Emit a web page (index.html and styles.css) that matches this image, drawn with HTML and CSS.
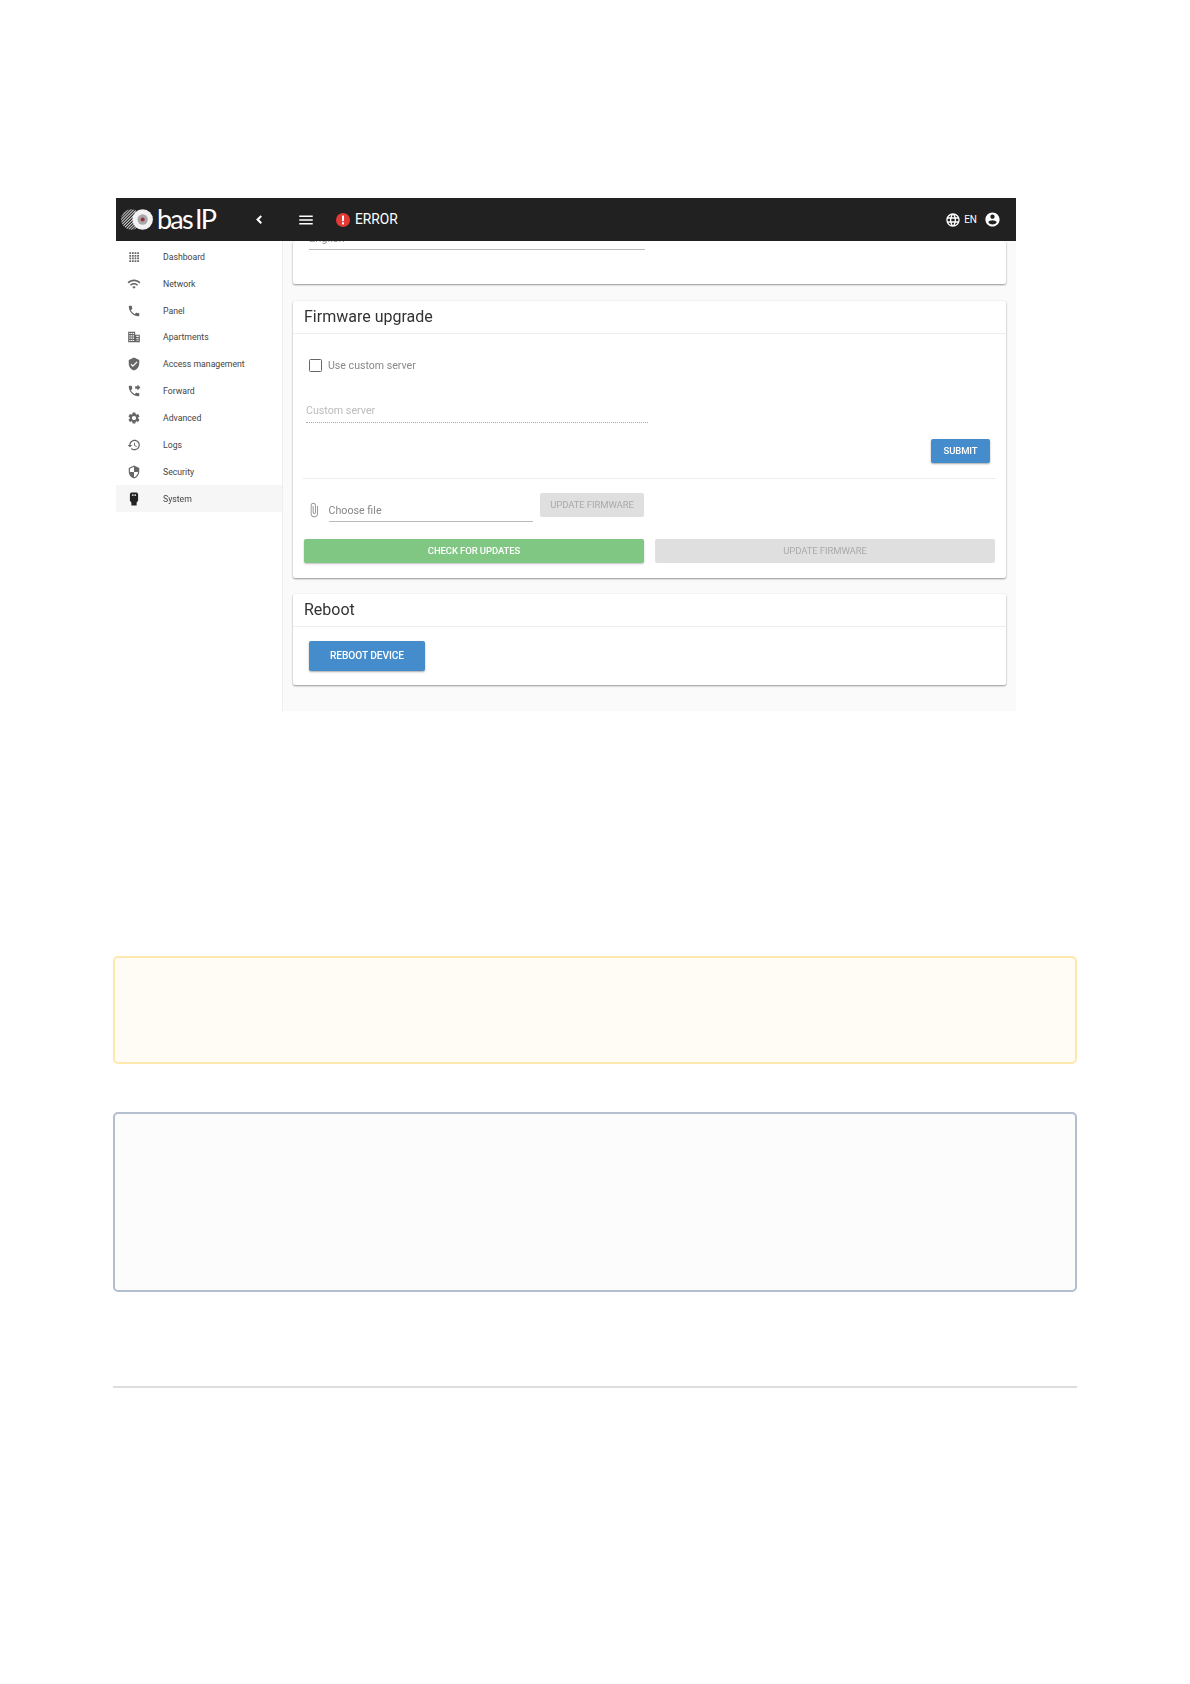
FILE: index.html
```html
<!DOCTYPE html>
<html lang="en">
<head>
<meta charset="utf-8">
<title>Firmware upgrade</title>
<link rel="stylesheet" href="styles.css">
</head>
<body>
<section class="shot">
  <header class="topbar">
    <div class="logo">
      <svg class="logo-mark" viewBox="0 0 34 22" aria-hidden="true">
        <defs>
          <pattern id="hatch" width="2" height="2" patternUnits="userSpaceOnUse" patternTransform="rotate(45)">
            <rect width="2" height="2" fill="#202020"/>
            <rect width="1" height="2" fill="#cfcfcf"/>
          </pattern>
        </defs>
        <circle cx="11" cy="11" r="10" fill="url(#hatch)"/>
        <circle cx="22" cy="11" r="10" fill="#f2f2f2"/>
        <circle cx="22" cy="11" r="5" fill="#a9a9a9"/>
        <circle cx="22" cy="11" r="2" fill="#9c2f3c"/>
      </svg>
      <span class="logo-text">bas IP</span>
    </div>
    <svg class="chev" viewBox="0 0 24 24" aria-hidden="true"><path d="M16 7.400 13.600 5l-7 7 7 7 2.400-2.400L11.400 12z"/></svg>
    <svg class="burger" viewBox="0 0 24 24" aria-hidden="true"><path d="M3 18h18v-2H3v2zm0-5h18v-2H3v2zm0-7v2h18V6H3z"/></svg>
    <svg class="err-icon" viewBox="0 0 16 16" aria-hidden="true"><circle cx="8" cy="8" r="7" fill="#e53935"/><rect x="7" y="3.600" width="2" height="5.600" fill="#fff"/><rect x="7" y="10.400" width="2" height="2" fill="#fff"/></svg>
    <span class="err-text">ERROR</span>
    <span class="spring"></span>
    <svg class="globe" viewBox="0 0 24 24" aria-hidden="true"><path d="M11.990 2C6.470 2 2 6.480 2 12s4.470 10 9.990 10C17.520 22 22 17.520 22 12S17.520 2 11.990 2zm6.930 6h-2.950c-.32-1.250-.78-2.450-1.380-3.560 1.840.63 3.370 1.910 4.330 3.560zM12 4.040c.83 1.200 1.480 2.530 1.910 3.960h-3.820c.43-1.430 1.080-2.760 1.910-3.960zM4.260 14C4.100 13.360 4 12.690 4 12s.1-1.360.26-2h3.380c-.08.66-.14 1.320-.14 2 0 .68.06 1.340.14 2H4.260zm.82 2h2.950c.32 1.250.78 2.450 1.380 3.560-1.840-.63-3.370-1.900-4.330-3.560zm2.950-8H5.080c.96-1.660 2.490-2.930 4.330-3.560C8.810 5.550 8.350 6.750 8.030 8zM12 19.960c-.83-1.200-1.480-2.530-1.910-3.960h3.820c-.43 1.430-1.080 2.760-1.910 3.960zM14.340 14H9.660c-.09-.66-.16-1.320-.16-2 0-.68.07-1.350.16-2h4.680c.09.65.16 1.320.16 2 0 .68-.07 1.340-.16 2zm.25 5.560c.6-1.110 1.060-2.310 1.380-3.560h2.950c-.96 1.650-2.490 2.930-4.330 3.560zM16.360 14c.08-.66.14-1.320.14-2 0-.68-.06-1.340-.14-2h3.380c.16.64.26 1.310.26 2s-.1 1.360-.26 2h-3.380z"/></svg>
    <span class="lang">EN</span>
    <svg class="user" viewBox="0 0 24 24" aria-hidden="true"><path d="M12 2C6.480 2 2 6.480 2 12s4.480 10 10 10 10-4.480 10-10S17.520 2 12 2zm0 3c1.660 0 3 1.340 3 3s-1.340 3-3 3-3-1.340-3-3 1.340-3 3-3zm0 14.200c-2.500 0-4.710-1.280-6-3.220.03-1.990 4-3.080 6-3.080 1.990 0 5.970 1.090 6 3.080-1.290 1.940-3.500 3.220-6 3.220z"/></svg>
  </header>
  <div class="body">
    <nav class="side">
      <a class="item"><svg class="ico" viewBox="0 0 24 24" aria-hidden="true"><path d="M4 4h3v3H4zM8.500 4h3v3h-3zM13 4h3v3h-3zM17.500 4h3v3h-3zM4 8.500h3v3H4zM8.500 8.500h3v3h-3zM13 8.500h3v3h-3zM17.500 8.500h3v3h-3zM4 13h3v3H4zM8.500 13h3v3h-3zM13 13h3v3h-3zM17.500 13h3v3h-3zM4 17.500h3v3H4zM8.500 17.500h3v3h-3zM13 17.500h3v3h-3zM17.500 17.500h3v3h-3z"/></svg><span>Dashboard</span></a>
      <a class="item"><svg class="ico" viewBox="0 0 24 24" aria-hidden="true"><path d="M1 9l2 2c4.970-4.970 13.030-4.970 18 0l2-2C16.930 2.930 7.080 2.930 1 9zm8 8l3 3 3-3c-1.650-1.660-4.340-1.660-6 0zm-4-4l2 2c2.760-2.760 7.240-2.760 10 0l2-2C15.140 9.140 8.870 9.140 5 13z"/></svg><span>Network</span></a>
      <a class="item"><svg class="ico" viewBox="0 0 24 24" aria-hidden="true"><path d="M6.620 10.790c1.440 2.830 3.760 5.140 6.590 6.590l2.200-2.200c.27-.27.67-.36 1.020-.24 1.120.37 2.330.57 3.570.57.55 0 1 .45 1 1V20c0 .55-.45 1-1 1-9.390 0-17-7.610-17-17 0-.55.45-1 1-1h3.500c.55 0 1 .45 1 1 0 1.250.2 2.450.57 3.570.11.35.03.74-.25 1.020l-2.200 2.200z"/></svg><span>Panel</span></a>
      <a class="item"><svg class="ico" viewBox="0 0 24 24" aria-hidden="true"><path d="M2 3h12v18H2zM14 8h8v13h-8z"/><path d="M4 5h2v2H4zM7 5h2v2H7zM10 5h2v2h-2zM4 9h2v2H4zM7 9h2v2H7zM10 9h2v2h-2zM4 13h2v2H4zM7 13h2v2H7zM10 13h2v2h-2zM4 17h2v2H4zM7 17h2v2H7zM10 17h2v2h-2zM16 10h4v2h-4zM16 14h4v2h-4zM16 18h4v1h-4z" fill="#fff"/></svg><span>Apartments</span></a>
      <a class="item"><svg class="ico" viewBox="0 0 24 24" aria-hidden="true"><path d="M12 1L3 5v6c0 5.550 3.840 10.740 9 12 5.160-1.260 9-6.450 9-12V5l-9-4zm-2 16l-4-4 1.410-1.410L10 14.170l6.590-6.590L18 9l-8 8z"/></svg><span>Access management</span></a>
      <a class="item"><svg class="ico" viewBox="0 0 24 24" aria-hidden="true"><path d="M18 11l5-5-5-5v3h-4v4h4v3zm2 4.500c-1.250 0-2.450-.2-3.570-.57-.35-.11-.74-.03-1.020.24l-2.200 2.200c-2.830-1.440-5.150-3.750-6.590-6.590l2.200-2.210c.28-.26.36-.65.25-1C8.700 6.450 8.500 5.250 8.500 4c0-.55-.45-1-1-1H4c-.55 0-1 .45-1 1 0 9.390 7.610 17 17 17 .55 0 1-.45 1-1v-3.500c0-.55-.45-1-1-1z"/></svg><span>Forward</span></a>
      <a class="item"><svg class="ico" viewBox="0 0 24 24" aria-hidden="true"><path d="M19.140 12.940c.04-.3.06-.61.06-.94 0-.32-.02-.64-.07-.94l2.030-1.580c.18-.14.23-.41.12-.61l-1.920-3.320c-.12-.22-.37-.29-.59-.22l-2.390.96c-.5-.38-1.030-.7-1.620-.94l-.36-2.540c-.04-.24-.24-.41-.48-.41h-3.840c-.24 0-.43.17-.47.41l-.36 2.540c-.59.24-1.130.57-1.620.94l-2.390-.96c-.22-.08-.47 0-.59.22L2.740 8.870c-.12.21-.08.47.12.61l2.030 1.580c-.05.3-.09.63-.09.94s.02.64.07.94l-2.030 1.580c-.18.14-.23.41-.12.61l1.920 3.320c.12.22.37.29.59.22l2.390-.96c.5.38 1.030.7 1.620.94l.36 2.540c.05.24.24.41.48.41h3.840c.24 0 .44-.17.47-.41l.36-2.540c.59-.24 1.130-.56 1.620-.94l2.390.96c.22.08.47 0 .59-.22l1.920-3.320c.12-.22.07-.47-.12-.61l-2.010-1.580zM12 15.600c-1.980 0-3.600-1.620-3.600-3.600s1.620-3.600 3.600-3.600 3.600 1.620 3.600 3.600-1.620 3.600-3.600 3.600z"/></svg><span>Advanced</span></a>
      <a class="item"><svg class="ico" viewBox="0 0 24 24" aria-hidden="true"><path d="M13 3c-4.970 0-9 4.030-9 9H1l3.890 3.890.07.14L9 12H6c0-3.870 3.130-7 7-7s7 3.130 7 7-3.130 7-7 7c-1.930 0-3.680-.79-4.940-2.060l-1.420 1.420C8.270 19.990 10.510 21 13 21c4.970 0 9-4.030 9-9s-4.030-9-9-9zm-1 5v5l4.280 2.540.72-1.210-3.500-2.080V8H12z"/></svg><span>Logs</span></a>
      <a class="item"><svg class="ico" viewBox="0 0 24 24" aria-hidden="true"><path d="M12 1L3 5v6c0 5.550 3.840 10.740 9 12 5.160-1.260 9-6.450 9-12V5l-9-4zm0 10.990h7c-.53 4.120-3.280 7.790-7 8.940V12H5V6.300l7-3.110v8.800z"/></svg><span>Security</span></a>
      <a class="item is-active"><svg class="ico" viewBox="0 0 24 24" aria-hidden="true"><path d="M7 1h10l2 2.500V15l-2.500 3v5h-9v-5L5 15V3.500z"/><path d="M8.500 4H10v3H8.500zM11.250 4h1.500v3h-1.500zM14 4h1.500v3H14z" fill="#f5f6f5"/></svg><span>System</span></a>
    </nav>
    <main class="main">
      <section class="card card-clip">
        <div class="clip-field">English</div>
      </section>
      <section class="card card-fw">
        <h2 class="card-title">Firmware upgrade</h2>
        <label class="check"><span class="box"></span><span>Use custom server</span></label>
        <div class="custom">Custom server</div>
        <div class="submit-row"><button class="btn btn-blue btn-submit">SUBMIT</button></div>
        <hr class="rule">
        <div class="file-row">
          <svg class="clip" viewBox="0 0 24 24" aria-hidden="true"><path d="M16.500 6v11.500c0 2.210-1.790 4-4 4s-4-1.790-4-4V5c0-1.380 1.120-2.500 2.500-2.500s2.500 1.120 2.500 2.500v10.500c0 .55-.45 1-1 1s-1-.45-1-1V6H10v9.500c0 1.380 1.120 2.500 2.500 2.500s2.500-1.120 2.500-2.500V5c0-2.210-1.790-4-4-4S7 2.790 7 5v12.500c0 3.040 2.460 5.500 5.500 5.500s5.500-2.460 5.500-5.500V6h-1.500z"/></svg>
          <div class="file-input">Choose file</div>
          <button class="btn btn-off btn-small">UPDATE FIRMWARE</button>
        </div>
        <div class="btn-row">
          <button class="btn btn-green">CHECK FOR UPDATES</button>
          <button class="btn btn-off">UPDATE FIRMWARE</button>
        </div>
      </section>
      <section class="card card-reboot">
        <h2 class="card-title">Reboot</h2>
        <button class="btn btn-blue btn-reboot">REBOOT DEVICE</button>
      </section>
    </main>
  </div>
</section>
<div class="note"></div>
<div class="info"></div>
<hr class="foot">
</body>
</html>
```
FILE: styles.css
```css
* { box-sizing: border-box; }
html, body { margin: 0; padding: 0; background: #fff; }
body { font-family: Roboto, "Liberation Sans", sans-serif; height: 1684px; overflow: hidden; }

.shot { width: 900px; height: 513px; margin: 198px 0 0 116px; display: flex; flex-direction: column; overflow: hidden; filter: blur(.35px); }

.topbar { flex: none; height: 43px; background: #212121; color: #fff; display: flex; align-items: center; position: relative; z-index: 1; }
.logo { display: flex; align-items: center; width: 136px; padding-left: 4px; }
.logo-mark { width: 35px; height: 23px; flex: none; }
.logo-text { margin: 0 0 2px 2px; font: 400 27px/38px Lato, Roboto, sans-serif; letter-spacing: -1.800px; word-spacing: -2px; white-space: nowrap; }
.chev { width: 15px; height: 15px; fill: #fff; flex: none; }
.burger { width: 18px; height: 18px; fill: #fff; margin-left: 30px; flex: none; }
.err-icon { width: 16px; height: 16px; margin-left: 20px; flex: none; }
.err-text { margin: 0 0 2px 4px; font-size: 13.800px; font-weight: 400; }
.spring { flex: 1; }
.globe { width: 16px; height: 16px; fill: #fff; flex: none; }
.lang { margin-left: 3px; font-size: 10px; }
.user { width: 17px; height: 17px; fill: #fff; margin: 0 15px 0 7px; flex: none; }

.body { flex: 1; display: flex; min-height: 0; }

.side { width: 167px; flex: none; background: #fff; border-right: 1px solid #eee; padding-top: 2.500px; }
.item { height: 26.850px; display: flex; align-items: center; padding-left: 11px; color: #444; font-size: 8.700px; }
.item span { margin-left: 22px; }
.item.is-active { background: #f5f6f5; }
.ico { width: 14px; height: 14px; fill: #666; flex: none; }
.is-active .ico { fill: #222; }

.main { flex: 1; min-width: 0; background: #fafafa; padding: 0 10px; }

.card { background: #fff; border-radius: 2px; box-shadow: 0 1px 2px rgba(0,0,0,.4), 0 0 2px rgba(0,0,0,.06); }
.card-clip { height: 43px; margin-bottom: 17px; overflow: hidden; }
.clip-field { width: 336px; margin: -9px 0 0 16px; height: 18px; border-bottom: 1px solid #bbb; color: #999; font-size: 11px; line-height: 13px; }
.card-fw { height: 277px; margin-bottom: 16px; }
.card-reboot { height: 91px; }
.card-title { margin: 0; height: 33px; padding-left: 11px; font-size: 16px; font-weight: 400; line-height: 31px; color: #333; border-bottom: 1px solid #eee; }

.check { display: flex; align-items: center; height: 14px; margin: 24px 0 0 15.500px; color: #888; font-size: 10.600px; }
.box { width: 13px; height: 13px; border: 1.500px solid #666; border-radius: 1.500px; margin-right: 6.500px; flex: none; }
.custom { width: 342px; margin: 31px 0 0 13px; height: 20px; border-bottom: 1px dotted #aaa; color: #bbb; font-size: 10.700px; line-height: 15px; }
.submit-row { display: flex; justify-content: flex-end; padding-right: 16px; margin-top: 16px; }
.rule { margin: 15px 10px 0; border: 0; border-top: 1px solid #eee; }
.file-row { display: flex; align-items: flex-start; margin: 15px 0 0 10px; height: 30px; }
.clip { width: 16px; height: 16px; fill: #999; margin: 8px 0 0 3px; flex: none; }
.file-input { width: 204px; height: 28px; margin-left: 6.500px; padding-top: 10px; border-bottom: 1px solid #bbb; color: #888; font-size: 10.700px; line-height: 13px; }
.btn-row { display: flex; gap: 11px; margin: 15px 11px 0; }

.btn { border: 0; border-radius: 2px; font-family: inherit; font-size: 9.500px; font-weight: 500; letter-spacing: -.1px; padding: 0 0 2px; }
.btn-blue { background: #448ccb; color: #fff; box-shadow: 0 1px 2px rgba(0,0,0,.35); }
.btn-submit { width: 59px; height: 24px; }
.btn-reboot { display: block; width: 116px; height: 30px; margin: 14px 0 0 16px; font-size: 10.200px; }
.btn-green { flex: 1; height: 24px; background: #81c784; color: #fff; box-shadow: 0 1px 2px rgba(0,0,0,.25); }
.btn-off { flex: 1; height: 24px; background: #dfdfdf; color: #aaa; font-weight: 400; }
.btn-small { flex: none; width: 104px; margin: -1px 0 0 7.500px; }

.note { margin: 245px 0 0 113px; width: 964px; height: 108px; background: #fffcf5; border: 2.500px solid #ffe8ae; border-radius: 5px; }
.info { margin: 48px 0 0 113px; width: 964px; height: 180px; background: #fcfcfc; border: 2.500px solid #b3bfcf; border-radius: 5px; }
.foot { margin: 94px 0 0 113px; width: 964px; border: 0; border-top: 2px solid #ddd; }
```
